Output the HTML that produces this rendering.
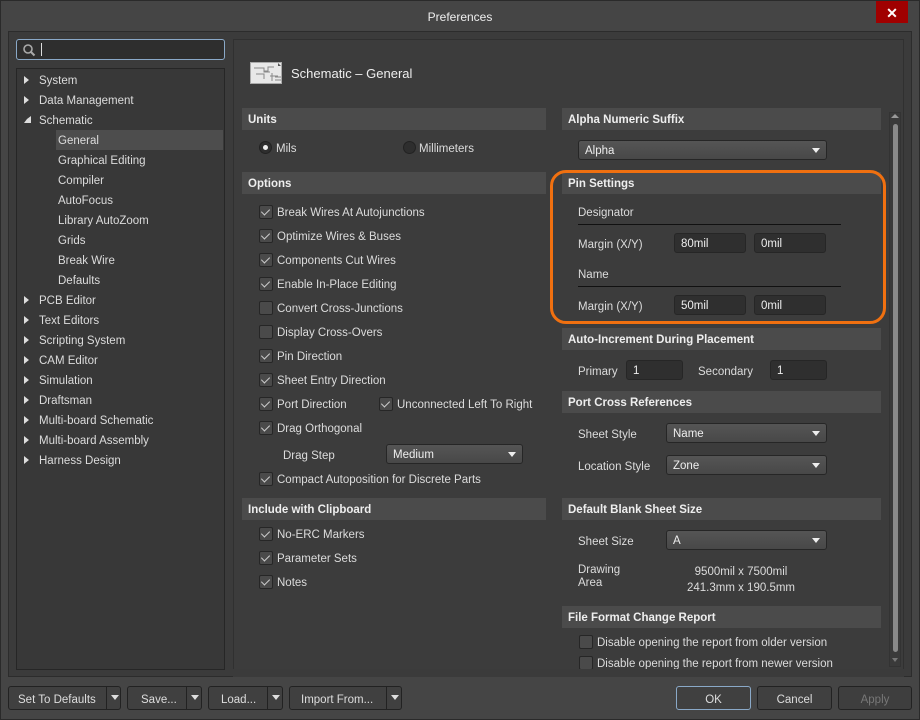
<!DOCTYPE html>
<html><head><meta charset="utf-8"><style>
*{box-sizing:border-box;margin:0;padding:0}
body{width:920px;height:720px;background:#454545;font-family:"Liberation Sans",sans-serif;font-size:11.5px;color:#dcdcdc;position:relative;overflow:hidden}
.a{position:absolute;white-space:nowrap;padding-top:2px}
.hd{position:absolute;height:22px;background:#4b4b4b;font-weight:bold;color:#eee;padding:6px 6px 0;font-size:11.5px}
.cb{position:absolute;width:14px;height:14px;border:1px solid #262626;background:#4a4a4a;border-radius:2px}
.cb.c::after{content:"";position:absolute;left:3px;top:1px;width:4px;height:7px;border:solid #ccc;border-width:0 1.3px 1.3px 0;transform:rotate(45deg)}
.dd{position:absolute;height:20px;background:linear-gradient(#555,#484848);border:1px solid #262626;border-radius:3px;padding:4px 6px 0;color:#eee}
.dd::after{content:"";position:absolute;right:6px;top:7px;border:4px solid transparent;border-top:5px solid #eee;border-bottom:0}
.in{position:absolute;height:20px;background:#2f2f2f;border:1px solid #262626;border-radius:3px;padding:4px 6px 0;color:#eee}
.ti{position:absolute;left:39px}
.ar{position:absolute;left:24px;width:0;height:0;border:4px solid transparent;border-left:5px solid #ddd;border-right:0;padding:0}
.bt{position:absolute;top:686px;height:24px;background:#404040;border:1px solid #222;border-radius:3px;color:#ddd;text-align:center;padding-top:7px}
.sp{position:absolute;top:0;bottom:0;width:1px;background:#222}
.tr{position:absolute;top:8px;border:4px solid transparent;border-top:5px solid #ddd;border-bottom:0}
</style></head><body>
<div class="a" style="left:0;top:0;width:920px;height:720px;border:1px solid #2a2a2a"></div>
<div class="a" style="left:0;top:8px;width:920px;text-align:center;color:#eee;font-size:12px">Preferences</div>
<div class="a" style="left:876px;top:1px;width:32px;height:22px;background:#a00000;color:#fff;text-align:center;font-weight:bold;font-size:14px;line-height:20px">✕</div>
<div class="a" style="left:8px;top:31px;width:904px;height:646px;background:#3b3b3b;border:1px solid #2c2c2c"></div>
<!-- search -->
<div class="a" style="left:16px;top:39px;width:209px;height:21px;background:#2e2e2e;border:1px solid #8aa9c8;border-radius:3px"></div>
<svg class="a" style="left:22px;top:43px;padding:0" width="14" height="14"><circle cx="6" cy="6" r="4" fill="none" stroke="#aaa" stroke-width="1.6"/><line x1="9" y1="9" x2="12.5" y2="12.5" stroke="#aaa" stroke-width="2"/></svg>
<div class="a" style="left:41px;top:43px;width:1px;height:13px;background:#ddd"></div>
<!-- tree -->
<div class="a" style="left:16px;top:68px;width:209px;height:602px;background:#383838;border:1px solid #262626;padding:0">
<div class="a" style="left:39px;top:61px;width:167px;height:20px;background:#4d4d4d"></div>
</div>
<div class="a" style="left:0;top:0;padding:0">
<div class="ar" style="top:76px"></div><div class="a ti" style="top:73px">System</div>
<div class="ar" style="top:96px"></div><div class="a ti" style="top:93px">Data Management</div>
<div class="a" style="left:24px;top:116px;border:3px solid transparent;border-right:4px solid #ddd;border-bottom:4px solid #ddd;width:0;height:0;padding:0"></div><div class="a ti" style="top:113px">Schematic</div>
<div class="a" style="left:58px;top:133px">General</div>
<div class="a" style="left:58px;top:153px">Graphical Editing</div>
<div class="a" style="left:58px;top:173px">Compiler</div>
<div class="a" style="left:58px;top:193px">AutoFocus</div>
<div class="a" style="left:58px;top:213px">Library AutoZoom</div>
<div class="a" style="left:58px;top:233px">Grids</div>
<div class="a" style="left:58px;top:253px">Break Wire</div>
<div class="a" style="left:58px;top:273px">Defaults</div>
<div class="ar" style="top:296px"></div><div class="a ti" style="top:293px">PCB Editor</div>
<div class="ar" style="top:316px"></div><div class="a ti" style="top:313px">Text Editors</div>
<div class="ar" style="top:336px"></div><div class="a ti" style="top:333px">Scripting System</div>
<div class="ar" style="top:356px"></div><div class="a ti" style="top:353px">CAM Editor</div>
<div class="ar" style="top:376px"></div><div class="a ti" style="top:373px">Simulation</div>
<div class="ar" style="top:396px"></div><div class="a ti" style="top:393px">Draftsman</div>
<div class="ar" style="top:416px"></div><div class="a ti" style="top:413px">Multi-board Schematic</div>
<div class="ar" style="top:436px"></div><div class="a ti" style="top:433px">Multi-board Assembly</div>
<div class="ar" style="top:456px"></div><div class="a ti" style="top:453px">Harness Design</div>
</div>
<!-- content -->
<div class="a" style="left:233px;top:39px;width:671px;height:631px;background:#3c3c3c;border:1px solid #303030"></div>
<svg class="a" style="left:250px;top:62px;padding:0" width="32" height="22"><rect x="0.5" y="0.5" width="31" height="21" fill="#e8e8e8" stroke="#aaa"/><path d="M4 6h10v4h6M6 12h8v5M14 9h4v-4h6M20 14h8M22 11v8M25 15h6M25 18h6" stroke="#888" fill="none"/><path d="M28 1l3 3h-3z" fill="#555"/></svg>
<div class="a" style="left:291px;top:64px;font-size:13px;color:#eee">Schematic – General</div>
<div class="hd" style="left:242px;top:108px;width:304px">Units</div>
<div class="a" style="left:259px;top:141px;width:13px;height:13px;border-radius:50%;background:#2e2e2e;border:1px solid #222;padding:0"><div style="margin:3px;width:5px;height:5px;border-radius:50%;background:#eee"></div></div>
<div class="a" style="left:276px;top:141px">Mils</div>
<div class="a" style="left:403px;top:141px;width:13px;height:13px;border-radius:50%;background:#2e2e2e;border:1px solid #222;padding:0"></div>
<div class="a" style="left:419px;top:141px">Millimeters</div>
<div class="hd" style="left:242px;top:172px;width:304px">Options</div>
<div class="cb c" style="left:259px;top:205px"></div><div class="a" style="left:277px;top:205px">Break Wires At Autojunctions</div>
<div class="cb c" style="left:259px;top:229px"></div><div class="a" style="left:277px;top:229px">Optimize Wires &amp; Buses</div>
<div class="cb c" style="left:259px;top:253px"></div><div class="a" style="left:277px;top:253px">Components Cut Wires</div>
<div class="cb c" style="left:259px;top:277px"></div><div class="a" style="left:277px;top:277px">Enable In-Place Editing</div>
<div class="cb" style="left:259px;top:301px"></div><div class="a" style="left:277px;top:301px">Convert Cross-Junctions</div>
<div class="cb" style="left:259px;top:325px"></div><div class="a" style="left:277px;top:325px">Display Cross-Overs</div>
<div class="cb c" style="left:259px;top:349px"></div><div class="a" style="left:277px;top:349px">Pin Direction</div>
<div class="cb c" style="left:259px;top:373px"></div><div class="a" style="left:277px;top:373px">Sheet Entry Direction</div>
<div class="cb c" style="left:259px;top:397px"></div><div class="a" style="left:277px;top:397px">Port Direction</div>
<div class="cb c" style="left:379px;top:397px"></div><div class="a" style="left:397px;top:397px">Unconnected Left To Right</div>
<div class="cb c" style="left:259px;top:421px"></div><div class="a" style="left:277px;top:421px">Drag Orthogonal</div>
<div class="a" style="left:283px;top:448px">Drag Step</div>
<div class="dd" style="left:386px;top:444px;width:137px">Medium</div>
<div class="cb c" style="left:259px;top:472px"></div><div class="a" style="left:277px;top:472px">Compact Autoposition for Discrete Parts</div>
<div class="hd" style="left:242px;top:498px;width:304px">Include with Clipboard</div>
<div class="cb c" style="left:259px;top:527px"></div><div class="a" style="left:277px;top:527px">No-ERC Markers</div>
<div class="cb c" style="left:259px;top:551px"></div><div class="a" style="left:277px;top:551px">Parameter Sets</div>
<div class="cb c" style="left:259px;top:575px"></div><div class="a" style="left:277px;top:575px">Notes</div>
<!-- right column -->
<div class="hd" style="left:562px;top:108px;width:319px">Alpha Numeric Suffix</div>
<div class="dd" style="left:578px;top:140px;width:249px">Alpha</div>
<div class="hd" style="left:562px;top:172px;width:319px">Pin Settings</div>
<div class="a" style="left:578px;top:205px">Designator</div>
<div class="a" style="left:578px;top:224px;width:263px;height:1px;background:#111;padding:0"></div>
<div class="a" style="left:578px;top:237px">Margin (X/Y)</div>
<div class="in" style="left:674px;top:233px;width:72px">80mil</div>
<div class="in" style="left:754px;top:233px;width:72px">0mil</div>
<div class="a" style="left:578px;top:267px">Name</div>
<div class="a" style="left:578px;top:286px;width:263px;height:1px;background:#111;padding:0"></div>
<div class="a" style="left:578px;top:299px">Margin (X/Y)</div>
<div class="in" style="left:674px;top:295px;width:72px">50mil</div>
<div class="in" style="left:754px;top:295px;width:72px">0mil</div>
<div class="a" style="left:550px;top:170px;width:336px;height:154px;border:3px solid #f07010;border-radius:16px;padding:0"></div>
<div class="hd" style="left:562px;top:328px;width:319px">Auto-Increment During Placement</div>
<div class="a" style="left:578px;top:364px">Primary</div>
<div class="in" style="left:626px;top:360px;width:57px">1</div>
<div class="a" style="left:698px;top:364px">Secondary</div>
<div class="in" style="left:770px;top:360px;width:57px">1</div>
<div class="hd" style="left:562px;top:391px;width:319px">Port Cross References</div>
<div class="a" style="left:578px;top:427px">Sheet Style</div>
<div class="dd" style="left:666px;top:423px;width:161px">Name</div>
<div class="a" style="left:578px;top:459px">Location Style</div>
<div class="dd" style="left:666px;top:455px;width:161px">Zone</div>
<div class="hd" style="left:562px;top:498px;width:319px">Default Blank Sheet Size</div>
<div class="a" style="left:578px;top:534px">Sheet Size</div>
<div class="dd" style="left:666px;top:530px;width:161px">A</div>
<div class="a" style="left:578px;top:562px;line-height:13px">Drawing<br>Area</div>
<div class="a" style="left:676px;top:562px;width:130px;text-align:center;line-height:16px">9500mil x 7500mil<br>241.3mm x 190.5mm</div>
<div class="hd" style="left:562px;top:606px;width:319px">File Format Change Report</div>
<div class="cb" style="left:579px;top:635px"></div><div class="a" style="left:597px;top:635px">Disable opening the report from older version</div>
<div class="cb" style="left:579px;top:656px"></div><div class="a" style="left:597px;top:656px">Disable opening the report from newer version</div>
<div class="a" style="left:233px;top:669px;width:671px;height:8px;background:#3b3b3b"></div>
<!-- scrollbar -->
<div class="a" style="left:889px;top:112px;width:12px;height:555px;background:#3a3a3a;border:1px solid #333"></div>
<div class="a" style="left:891px;top:114px;border:4px solid transparent;border-bottom:4px solid #999;border-top:0;padding:0"></div>
<div class="a" style="left:893px;top:124px;width:5px;height:528px;background:#8a8a8a;border-radius:3px"></div>
<div class="a" style="left:892px;top:658px;border:3px solid transparent;border-top:4px solid #777;border-bottom:0;padding:0"></div>
<!-- buttons -->
<div class="bt" style="left:8px;width:113px;text-align:left;padding-left:9px">Set To Defaults<div class="sp" style="left:97px"></div><div class="tr" style="left:102px"></div></div>
<div class="bt" style="left:127px;width:75px;text-align:left;padding-left:13px">Save...<div class="sp" style="left:58px"></div><div class="tr" style="left:63px"></div></div>
<div class="bt" style="left:208px;width:75px;text-align:left;padding-left:12px">Load...<div class="sp" style="left:58px"></div><div class="tr" style="left:63px"></div></div>
<div class="bt" style="left:289px;width:113px;text-align:left;padding-left:11px">Import From...<div class="sp" style="left:96px"></div><div class="tr" style="left:101px"></div></div>
<div class="bt" style="left:676px;width:75px;border-color:#8aa9c8">OK</div>
<div class="bt" style="left:757px;width:75px">Cancel</div>
<div class="bt" style="left:838px;width:74px;color:#777;background:#3e3e3e">Apply</div>
</body></html>
